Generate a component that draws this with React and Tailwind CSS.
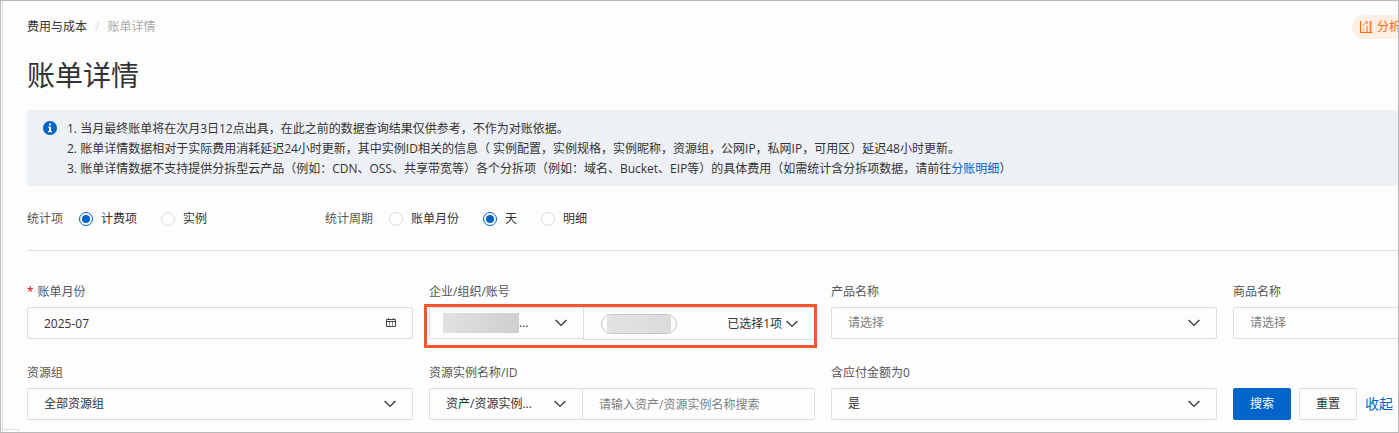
import React, { useState } from 'react';

const Chevron = ({ className }) => (
  <svg className={className} width="12" height="8" viewBox="0 0 12 8" fill="none" stroke="#333333" strokeWidth="1.3">
    <path d="M0.6 1 L6 6.4 L11.4 1" />
  </svg>
);

const CalendarIcon = ({ className }) => (
  <svg className={className} width="10" height="10" viewBox="0 0 10 10" fill="none" stroke="#444444" strokeWidth="1">
    <path d="M0.5 1.5 H9.5 V8.5 H0.5 Z M0.5 3.5 H9.5 M2.5 0 V2 M7.5 0 V2" />
    <path d="M3.5 4 V8.5 M6.5 4 V8.5" strokeWidth="0.6" />
  </svg>
);

const InfoIcon = ({ className }) => (
  <svg className={className} width="14" height="14" viewBox="0 0 14 14">
    <circle cx="7" cy="7" r="7" fill="#0064c8" />
    <path d="M6 2.4 H8 V4.2 H6 Z M5.2 5.6 H8 V10 H9 V11.2 H5 V10 H6 V6.8 H5.2 Z" fill="#ffffff" />
  </svg>
);

const ChartIcon = () => (
  <svg className="shrink-0" width="13" height="12" viewBox="0 0 13 12" fill="none">
    <path d="M0.5 0 V11.5 H12.5" stroke="#ff6a00" strokeWidth="1" />
    <path d="M2.5 11 V7 H4.5 V11 Z" fill="#ffd0ae" />
    <path d="M6 11 V5 H8 V11 Z" fill="#ffab70" />
    <path d="M9.5 11 V0 H11.5 V11 Z" fill="#ff8a3c" />
    <path d="M2.5 4.5 L7 1.2 M4.8 0.8 H7.4 V3.2" stroke="#ff8a3c" strokeWidth="0.9" />
  </svg>
);

const RadioGroup = ({ label, name, options, value, onChange }) => (
  <fieldset className="flex items-center">
    <legend className="float-left mr-4 text-[#555555]">{label}</legend>
    <div className="flex items-center gap-6">
      {options.map((option) => (
        <label key={option} className="flex items-center gap-2">
          <input
            type="radio"
            name={name}
            checked={value === option}
            onChange={() => onChange(option)}
            className="size-3.5 appearance-none rounded-full border border-[#dedede] bg-white bg-clip-content p-0.5 checked:border-[#0064c8] checked:bg-[#0064c8]"
          />
          {option}
        </label>
      ))}
    </div>
  </fieldset>
);

const Field = ({ id, label, required, children }) => (
  <div>
    <label htmlFor={id} className="mb-[5px] block text-[#555555]">
      {required && <span className="mr-1 text-[#e60012]">*</span>}
      {label}
    </label>
    {children}
  </div>
);

const SelectBox = ({ id, option, muted }) => (
  <div className="relative">
    <select
      id={id}
      className={`h-8 w-full appearance-none rounded-xs border border-[#dedede] px-4 ${muted ? 'text-[#808080]' : ''}`}
    >
      <option>{option}</option>
    </select>
    <Chevron className="pointer-events-none absolute top-3 right-[17px]" />
  </div>
);

const App = () => {
  const [item, setItem] = useState('计费项');
  const [period, setPeriod] = useState('天');
  const [month, setMonth] = useState('2025-07');

  return (
    <div className="overflow-hidden border border-[#b9b9b9] bg-[#fdfdfd] pl-px font-['Open_Sans','Noto_Sans_CJK_SC',sans-serif] text-xs/5 text-[#333333]">
      <div className="border-l border-[#dedede] pl-6">
        <header className="flex items-center justify-between pt-3.5">
          <nav className="flex items-center gap-2">
            <a href="#cost">费用与成本</a>
            <span className="text-[#dedede]">/</span>
            <span className="text-[#aaaaaa]">账单详情</span>
          </nav>
          <button className="flex h-6 w-[46px] items-center gap-1 overflow-hidden rounded-l-full bg-[#ffeee3] pl-2 whitespace-nowrap text-[#ff6a00]">
            <ChartIcon />
            分析
          </button>
        </header>

        <h1 className="mt-4 text-[28px]/10">账单详情</h1>

        <section className="mt-[15px] flex rounded-l-xs bg-[#edf0f5] pt-[9px] pb-[7px] pl-4">
          <InfoIcon className="mt-0.5 mr-2.5 shrink-0" />
          <div className="whitespace-nowrap">
            <p>1. 当月最终账单将在次月3日12点出具，在此之前的数据查询结果仅供参考，不作为对账依据。</p>
            <p>2. 账单详情数据相对于实际费用消耗延迟24小时更新，其中实例ID相关的信息（ 实例配置，实例规格，实例昵称，资源组，公网IP，私网IP，可用区）延迟48小时更新。</p>
            <p>
              3. 账单详情数据不支持提供分拆型云产品（例如：CDN、OSS、共享带宽等）各个分拆项（例如：域名、Bucket、EIP等）的具体费用（如需统计含分拆项数据，请前往
              <a href="#split" className="text-[#0064c8]">分账明细</a>）
            </p>
          </div>
        </section>

        <div className="flex border-b border-[#dedede] pt-[23px] pb-[21px]">
          <div className="w-[298px]">
            <RadioGroup label="统计项" name="item" options={['计费项', '实例']} value={item} onChange={setItem} />
          </div>
          <RadioGroup label="统计周期" name="period" options={['账单月份', '天', '明细']} value={period} onChange={setPeriod} />
        </div>

        <form className="grid grid-cols-[repeat(4,minmax(386px,1fr))] gap-x-4 gap-y-6 pt-[31px] pb-[9px]" onSubmit={(e) => e.preventDefault()}>
          <Field id="month" label="账单月份" required>
            <div className="relative">
              <input
                id="month"
                type="text"
                value={month}
                onChange={(e) => setMonth(e.target.value)}
                className="h-8 w-full rounded-xs border border-[#dedede] px-4"
              />
              <CalendarIcon className="pointer-events-none absolute top-[11px] right-[17px]" />
            </div>
          </Field>

          <Field id="account-type" label="企业/组织/账号">
            <div className="relative flex h-8 items-start">
              <div className="relative w-[154px]">
                <select id="account-type" className="h-8 w-full appearance-none rounded-l-xs border border-r-0 border-[#dedede] pl-[89px]">
                  <option>...</option>
                </select>
                <span className="absolute top-1.5 left-3.5 h-5 w-[76px] bg-linear-to-r from-[#e2e1e0] to-[#cfcfcf]" />
                <Chevron className="pointer-events-none absolute top-3 right-4" />
              </div>
              <button type="button" className="flex h-[33px] flex-1 items-center justify-between border border-[#dedede] pr-4 pl-[17px]">
                <span className="flex h-5 w-19 justify-center rounded-full border border-[#c4c6cf]">
                  <span className="h-[18px] w-16 bg-linear-to-r from-[#e4e3e2] to-[#dadbdd]" />
                </span>
                <span className="flex items-center gap-1">
                  已选择1项
                  <Chevron />
                </span>
              </button>
              {/* highlight frame around the account selectors */}
              <div className="pointer-events-none absolute -top-[3px] -right-0.5 -left-[5px] h-11 border-3 border-[#f4572f]" />
            </div>
          </Field>

          <Field id="product" label="产品名称">
            <SelectBox id="product" option="请选择" muted />
          </Field>

          <Field id="commodity" label="商品名称">
            <SelectBox id="commodity" option="请选择" muted />
          </Field>

          <Field id="group" label="资源组">
            <SelectBox id="group" option="全部资源组" />
          </Field>

          <Field id="instance-type" label="资源实例名称/ID">
            <div className="flex">
              <div className="w-[154px]">
                <SelectBox id="instance-type" option="资产/资源实例..." />
              </div>
              <input
                id="instance"
                type="text"
                aria-labelledby="instance-type"
                placeholder="请输入资产/资源实例名称搜索"
                className="-ml-px h-8 flex-1 rounded-r-xs border border-[#dedede] px-4 placeholder:text-[#808080]"
              />
            </div>
          </Field>

          <Field id="zero" label="含应付金额为0">
            <SelectBox id="zero" option="是" />
          </Field>

          <div className="flex items-end gap-2">
            <button type="submit" className="h-8 w-[58px] rounded-xs bg-[#0064c8] text-white">搜索</button>
            <button type="reset" className="h-8 w-[58px] rounded-xs border border-[#dedede]">重置</button>
            <button type="button" className="h-8 text-sm text-[#0064c8]">收起</button>
          </div>
        </form>

        {/* top edge of the side drawer handle */}
        <div className="-ml-6 h-[3px] w-4 border-t border-r border-[#dedede]" />
      </div>
    </div>
  );
};

export default App;
